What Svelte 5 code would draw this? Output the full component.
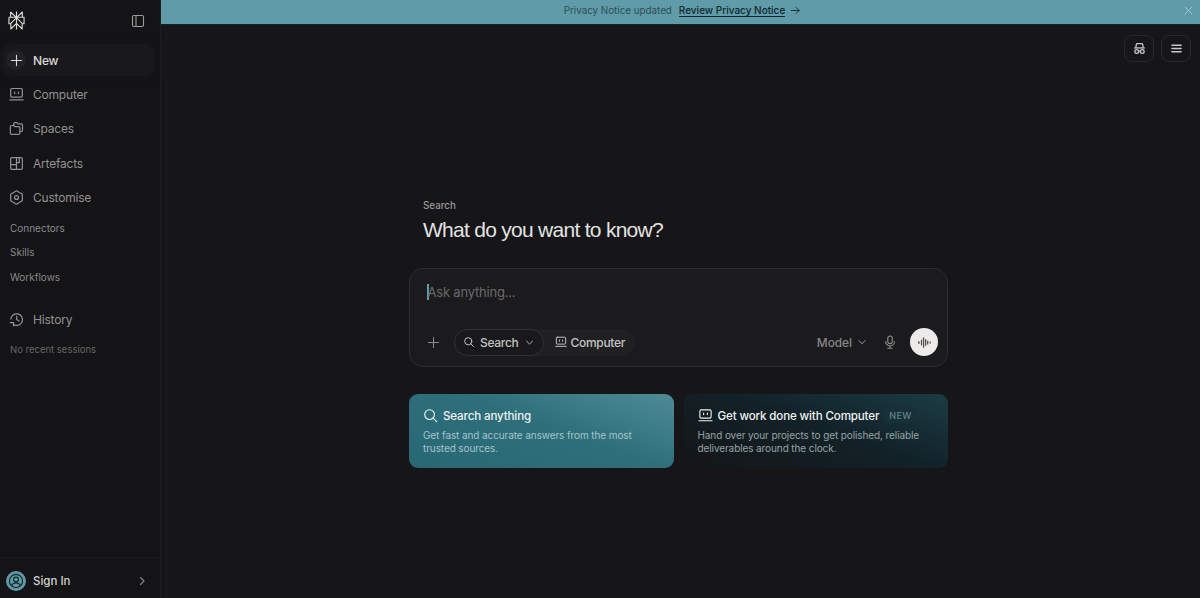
<script>
  const nav = [
    { label: 'Computer', icon: 'computer' },
    { label: 'Spaces', icon: 'spaces' },
    { label: 'Artefacts', icon: 'artefacts' },
    { label: 'Customise', icon: 'customise' }
  ];
  const subs = ['Connectors', 'Skills', 'Workflows'];
</script>

{#snippet icon(name)}
  <svg class="ic" viewBox="0 0 16 16" fill="none" stroke="currentColor" stroke-width="1.3" stroke-linecap="round" stroke-linejoin="round">
    {#if name === 'computer'}
      <rect x="1.800" y="1.600" width="12.400" height="9.200" rx="1.200" /><path d="M1 13.800h14M6 5.400v1.600M10 5.400v1.600" />
    {:else if name === 'spaces'}
      <path d="M5 4.200V3a1.200 1.200 0 0 1 1.200-1.200h2.300l1.300 1.300h3.200A1.400 1.400 0 0 1 14.400 4.500v5.300a1.400 1.400 0 0 1-1.400 1.400h-1.400" /><path d="M1.400 6.200A1.400 1.400 0 0 1 2.800 4.800h2.400l1.300 1.300h3.700a1.400 1.400 0 0 1 1.400 1.400v5.300a1.400 1.400 0 0 1-1.400 1.400H2.800a1.400 1.400 0 0 1-1.400-1.400z" />
    {:else if name === 'artefacts'}
      <rect x="1.800" y="1.800" width="12.400" height="12.400" rx="1.200" /><path d="M8 1.800v12.400M1.800 9.200H8M8 7h3V1.800" />
    {:else if name === 'customise'}
      <path d="M8 .9l6.200 3.600v7L8 15.100l-6.200-3.600v-7z" /><circle cx="8" cy="8" r="2.100" />
    {:else if name === 'history'}
      <path d="M2 7.500A6.200 6.200 0 1 1 5.500 13.700" /><path d="M1.400 11.400h3.400v3.200M8.200 4.600V8l2.400 1.500" />
    {:else if name === 'search'}
      <circle cx="7" cy="7" r="4.800" /><path d="M10.600 10.600L14 14" />
    {:else if name === 'chev'}
      <path d="M3.600 6l4.400 4.200L12.400 6" />
    {/if}
  </svg>
{/snippet}

<div class="app">
  <aside class="side">
    <div class="brand">
      <svg class="logo" viewBox="0 0 18 20" fill="none" stroke="currentColor" stroke-width="1.200" stroke-linejoin="round">
        <path d="M9 .5v19M2.800 1L9 7l6.200-6v5.500M2.800 1v5.500M1 6.500h16v7h-2M1 6.500v7h2M9 7l-6 6v6l6-6 6 6v-6z" />
      </svg>
      <svg class="toggle" viewBox="0 0 14 14" fill="none" stroke="currentColor" stroke-width="1.100">
        <rect x="1.500" y="1.500" width="11" height="11" rx="1.500" /><path d="M5 1.500v11" />
      </svg>
    </div>

    <div class="new">
      <span class="plus">
        <svg viewBox="0 0 14 14" fill="none" stroke="currentColor" stroke-width="1.200" stroke-linecap="round"><path d="M7 1.500v11M1.500 7h11" /></svg>
      </span>
      <span>New</span>
    </div>

    {#each nav as n}
      <div class="item">{@render icon(n.icon)}<span>{n.label}</span></div>
    {/each}

    <div class="subs">
      {#each subs as s}<div class="sub">{s}</div>{/each}
    </div>

    <div class="item hist">{@render icon('history')}<span>History</span></div>
    <div class="empty">No recent sessions</div>

    <div class="foot">
      <span class="avatar">
        <svg viewBox="0 0 20 20" fill="none" stroke="currentColor" stroke-width="1.200">
          <circle cx="10" cy="10" r="6.600" /><circle cx="10" cy="8.500" r="2.400" /><path d="M5.600 14.600c1-2 2.600-2.800 4.400-2.800s3.400.8 4.400 2.800" />
        </svg>
      </span>
      <span class="signin">Sign In</span>
      <svg class="go" viewBox="0 0 10 10" fill="none" stroke="currentColor" stroke-width="1.100" stroke-linecap="round" stroke-linejoin="round"><path d="M3.500 1.500L7 5 3.500 8.500" /></svg>
    </div>
  </aside>

  <main class="main">
    <div class="banner">
      <span class="notice">Privacy Notice updated</span>
      <span class="review">Review Privacy Notice</span>
      <svg class="arrow" viewBox="0 0 12 12" fill="none" stroke="currentColor" stroke-width="1" stroke-linecap="round" stroke-linejoin="round"><path d="M1.500 6h8.500M6.800 2.800L10 6 6.800 9.200" /></svg>
      <svg class="close" viewBox="0 0 10 10" fill="none" stroke="currentColor" stroke-width="1" stroke-linecap="round"><path d="M1 1l8 8M9 1L1 9" /></svg>
    </div>

    <div class="tools">
      <button class="tool" aria-label="Incognito">
        <svg viewBox="0 0 14 14" fill="none" stroke="currentColor" stroke-width="1.400" stroke-linejoin="round">
          <path d="M3 6l.6-3.400a1 1 0 0 1 1-.8h4.800a1 1 0 0 1 1 .8L11 6" /><path d="M1.200 6.400h11.600" /><circle cx="4" cy="10.200" r="2" /><circle cx="10" cy="10.200" r="2" /><path d="M6 10h2" />
        </svg>
      </button>
      <button class="tool" aria-label="Menu">
        <svg viewBox="0 0 14 14" fill="none" stroke="currentColor" stroke-width="1.400" stroke-linecap="round"><path d="M2 3.500h10M2 7h10M2 10.500h10" /></svg>
      </button>
    </div>

    <section class="center">
      <div class="eyebrow">Search</div>
      <h1>What do you want to know?</h1>

      <div class="box">
        <div class="input"><span class="caret"></span>Ask anything...</div>
        <div class="row">
          <svg class="addic" viewBox="0 0 14 14" fill="none" stroke="currentColor" stroke-width="1.100" stroke-linecap="round"><path d="M7 1.500v11M1.500 7h11" /></svg>
          <div class="seg">
            <span class="pill active">{@render icon('search')}Search<span class="chev">{@render icon('chev')}</span></span>
            <span class="pill">{@render icon('computer')}Computer</span>
          </div>
          <div class="spacer"></div>
          <span class="model">Model<span class="chev2">{@render icon('chev')}</span></span>
          <svg class="mic" viewBox="0 0 14 14" fill="none" stroke="currentColor" stroke-width="1.100" stroke-linecap="round"><rect x="4.800" y="1" width="4.400" height="7.600" rx="2.200" /><path d="M2.600 6.600a4.400 4.400 0 0 0 8.800 0M7 11v2M4.800 13.200h4.400" /></svg>
          <span class="voice">
            <svg viewBox="0 0 16 16" fill="none" stroke="currentColor" stroke-width="1.300" stroke-linecap="round"><path d="M2 7v2M4.800 5.500v5M7 3v10M9.200 5v6M11.400 6.500v3M14 7.400v1.200" /></svg>
          </span>
        </div>
      </div>

      <div class="cards">
        <div class="card teal">
          <div class="ct">
            <svg class="cardic" viewBox="0 0 16 16" fill="none" stroke="currentColor" stroke-width="1.200" stroke-linecap="round"><circle cx="7" cy="7" r="5.200" /><path d="M10.800 10.800L14.600 14.600" /></svg>
            Search anything
          </div>
          <p>Get fast and accurate answers from the most trusted sources.</p>
        </div>
        <div class="card dark">
          <div class="ct">
            <svg class="cardic" viewBox="0 0 16 16" fill="none" stroke="currentColor" stroke-width="1.200" stroke-linecap="round"><rect x="2" y="2" width="12" height="8.800" rx="1.400" /><path d="M1 13.600h14M6 5.400v1.600M10 5.400v1.600" /></svg>
            Get work done with Computer
            <span class="badge">NEW</span>
          </div>
          <p>Hand over your projects to get polished, reliable deliverables around the clock.</p>
        </div>
      </div>
    </section>
  </main>
</div>

<style>
  :global(body) {
    margin: 0;
    background: #161517;
    font-family: Inter, "Liberation Sans", sans-serif;
  }
  .app {
    display: flex;
    width: 1200px;
    height: 598px;
    overflow: hidden;
    background: #161517;
    color: #8f8f8f;
  }
  .side {
    width: 160px;
    flex: none;
    display: flex;
    flex-direction: column;
    border-right: 1px solid #1e1d1f;
    background: #141315;
  }
  .brand {
    height: 41px;
    display: flex;
    align-items: center;
    justify-content: space-between;
    padding: 0 15px 0 8px;
  }
  .logo { width: 17px; height: 19px; color: #dcdcdc; }
  .toggle { width: 14px; height: 14px; color: #9c9c9c; }
  .new {
    margin: 3px 6px 1px 3px;
    height: 32px;
    padding-left: 3px;
    display: flex;
    align-items: center;
    gap: 7px;
    border-radius: 10px;
    background: #19181a;
    box-shadow: 0 0 6px #19181a;
    color: #d8d8d8;
    font-size: 12px;
    letter-spacing: -0.2px;
    font-weight: 500;
  }
  .plus {
    width: 20px;
    height: 20px;
    border-radius: 50%;
    background: #222123;
    display: flex;
    align-items: center;
    justify-content: center;
  }
  .plus svg { width: 13px; height: 13px; }
  .item {
    height: 34.500px;
    padding-left: 9px;
    display: flex;
    align-items: center;
    gap: 9px;
    font-size: 12px;
    letter-spacing: -0.2px;
    color: #929292;
  }
  .ic { width: 15px; height: 15px; flex: none; }
  .subs {
    margin-top: 1px;
    display: flex;
    flex-direction: column;
    font-size: 10px;
    color: #8a8a8a;
  }
  .sub {
    height: 24.300px;
    line-height: 24.300px;
    padding-left: 10px;
  }
  .hist { margin-top: 13px; }
  .empty {
    padding-left: 10px;
    margin-top: 8px;
    font-size: 9.500px;
    color: #666;
  }
  .foot {
    margin-top: auto;
    height: 41px;
    box-sizing: border-box;
    border-top: 1px solid #1c1b1d;
    display: flex;
    align-items: center;
    padding: 6px 13px 0 6px;
    gap: 7px;
  }
  .avatar {
    width: 20px;
    height: 20px;
    border-radius: 50%;
    background: #5b9aa6;
    color: #17262b;
    display: flex;
  }
  .avatar svg { width: 20px; height: 20px; }
  .signin { font-size: 11.500px; color: #d2d2d2; font-weight: 500; }
  .go { width: 10px; height: 10px; margin-left: auto; color: #7d8a8e; }

  .main {
    flex: 1;
    min-width: 0;
    display: flex;
    flex-direction: column;
  }
  .banner {
    flex: none;
    position: relative;
    background: #5f9ba8;
    display: flex;
    align-items: center;
    justify-content: center;
    font-size: 10px;
    color: #2c4f59;
    border-bottom: 1px solid #0f2327;
    padding-left: 4px;
    padding-bottom: 4px;
    height: 20px;
  }
  .notice { margin-right: 7px; font-size: 9.800px; }
  .review {
    color: #10262c;
    font-weight: 500;
    border-bottom: 1px solid #10262c;
    line-height: 12px;
  }
  .arrow { width: 11px; height: 11px; margin-left: 5px; color: #14292f; }
  .close {
    position: absolute;
    right: 7px;
    top: 6px;
    width: 9px;
    height: 9px;
    color: #a7cbd2;
  }
  .tools {
    display: flex;
    justify-content: flex-end;
    gap: 7px;
    padding: 10px 9px 0 0;
  }
  .tool {
    width: 30px;
    height: 27px;
    padding: 0;
    background: #161517;
    border: 1px solid #29282a;
    border-radius: 8px;
    color: #c8c8c8;
    display: flex;
    align-items: center;
    justify-content: center;
  }
  .tool svg { width: 13px; height: 13px; }

  .center {
    width: 539px;
    margin: 137px 0 0 248px;
  }
  .eyebrow {
    margin-left: 14px;
    font-size: 9.800px;
    line-height: 14px;
    color: #9a9a9a;
    font-weight: 500;
  }
  h1 {
    margin: 4px 0 0 14px;
    font-family: "Liberation Sans", Inter, sans-serif;
    font-size: 21px;
    line-height: 26px;
    font-weight: 400;
    letter-spacing: -0.72px;
    color: #e3e3e3;
  }
  .box {
    margin-top: 25px;
    height: 99px;
    box-sizing: border-box;
    border: 1px solid #2e2d2f;
    border-radius: 14px;
    background: #1b1a1c;
    padding: 14px 9px 10px 17px;
    display: flex;
    flex-direction: column;
    justify-content: space-between;
  }
  .input {
    display: flex;
    align-items: center;
    font-size: 13px;
    letter-spacing: -0.2px;
    line-height: 18px;
    color: #6a6a6a;
  }
  .caret {
    width: 1.500px;
    height: 16px;
    background: #5f9ba8;
    margin-right: -1px;
  }
  .row {
    display: flex;
    align-items: center;
    height: 28px;
  }
  .addic { width: 13px; height: 13px; color: #8d8d8d; margin-right: 14px; }
  .seg {
    display: flex;
    align-items: center;
    background: #201f21;
    border-radius: 14px;
  }
  .pill {
    height: 25px;
    display: flex;
    align-items: center;
    gap: 4px;
    padding: 0 9px 0 10px;
    font-size: 12px;
    letter-spacing: -0.3px;
    font-weight: 500;
    color: #c4c4c4;
    border-radius: 14px;
    border: 1px solid transparent;
    white-space: nowrap;
  }
  .pill .ic { width: 12px; height: 12px; }
  .active {
    background: #19181a;
    border-color: #323133;
    padding: 0 8px;
    gap: 5px;
  }
  .chev { display: flex; margin-left: 0; }
  .chev .ic { width: 11px; height: 11px; }
  .spacer { flex: 1; }
  .model {
    display: flex;
    align-items: center;
    gap: 4px;
    font-size: 12px;
    letter-spacing: -0.1px;
    font-weight: 500;
    color: #868686;
    margin-right: 15px;
  }
  .chev2 { display: flex; color: #9a9a9a; }
  .chev2 .ic { width: 12px; height: 12px; }
  .mic { width: 14px; height: 14px; color: #909090; margin-right: 13px; }
  .voice {
    width: 28px;
    height: 28px;
    border-radius: 50%;
    background: #ecebe9;
    color: #4a4a4a;
    display: flex;
    align-items: center;
    justify-content: center;
  }
  .voice svg { width: 15px; height: 15px; }
  .cards {
    margin-top: 27px;
    display: flex;
    gap: 10px;
  }
  .card {
    flex: 1;
    height: 74px;
    box-sizing: border-box;
    border-radius: 9px;
    padding: 13px 14px 0;
  }
  .teal {
    background: linear-gradient(20deg, #276874 0%, #2f6f7c 55%, #4d8c96 100%);
  }
  .dark {
    background: linear-gradient(20deg, #141517 0%, #122229 55%, #1b3c45 100%);
  }
  .ct {
    display: flex;
    align-items: center;
    gap: 5px;
    height: 17px;
    font-size: 11.600px;
    letter-spacing: -0.15px;
    font-weight: 500;
    color: #eef2f2;
    white-space: nowrap;
  }
  .cardic { width: 15px; height: 15px; flex: none; }
  .badge {
    margin-left: 0;
    padding: 2px 5px;
    font-size: 9px;
    letter-spacing: 0.4px;
    border-radius: 4px;
    color: #5c858f;
    background: #1a3038;
  }
  .card p {
    margin: 5px 0 0;
    font-size: 10px;
    line-height: 13px;
    color: #a5c4ca;
    letter-spacing: -0.1px;
  }
  .dark p { color: #97a3a6; }
</style>
